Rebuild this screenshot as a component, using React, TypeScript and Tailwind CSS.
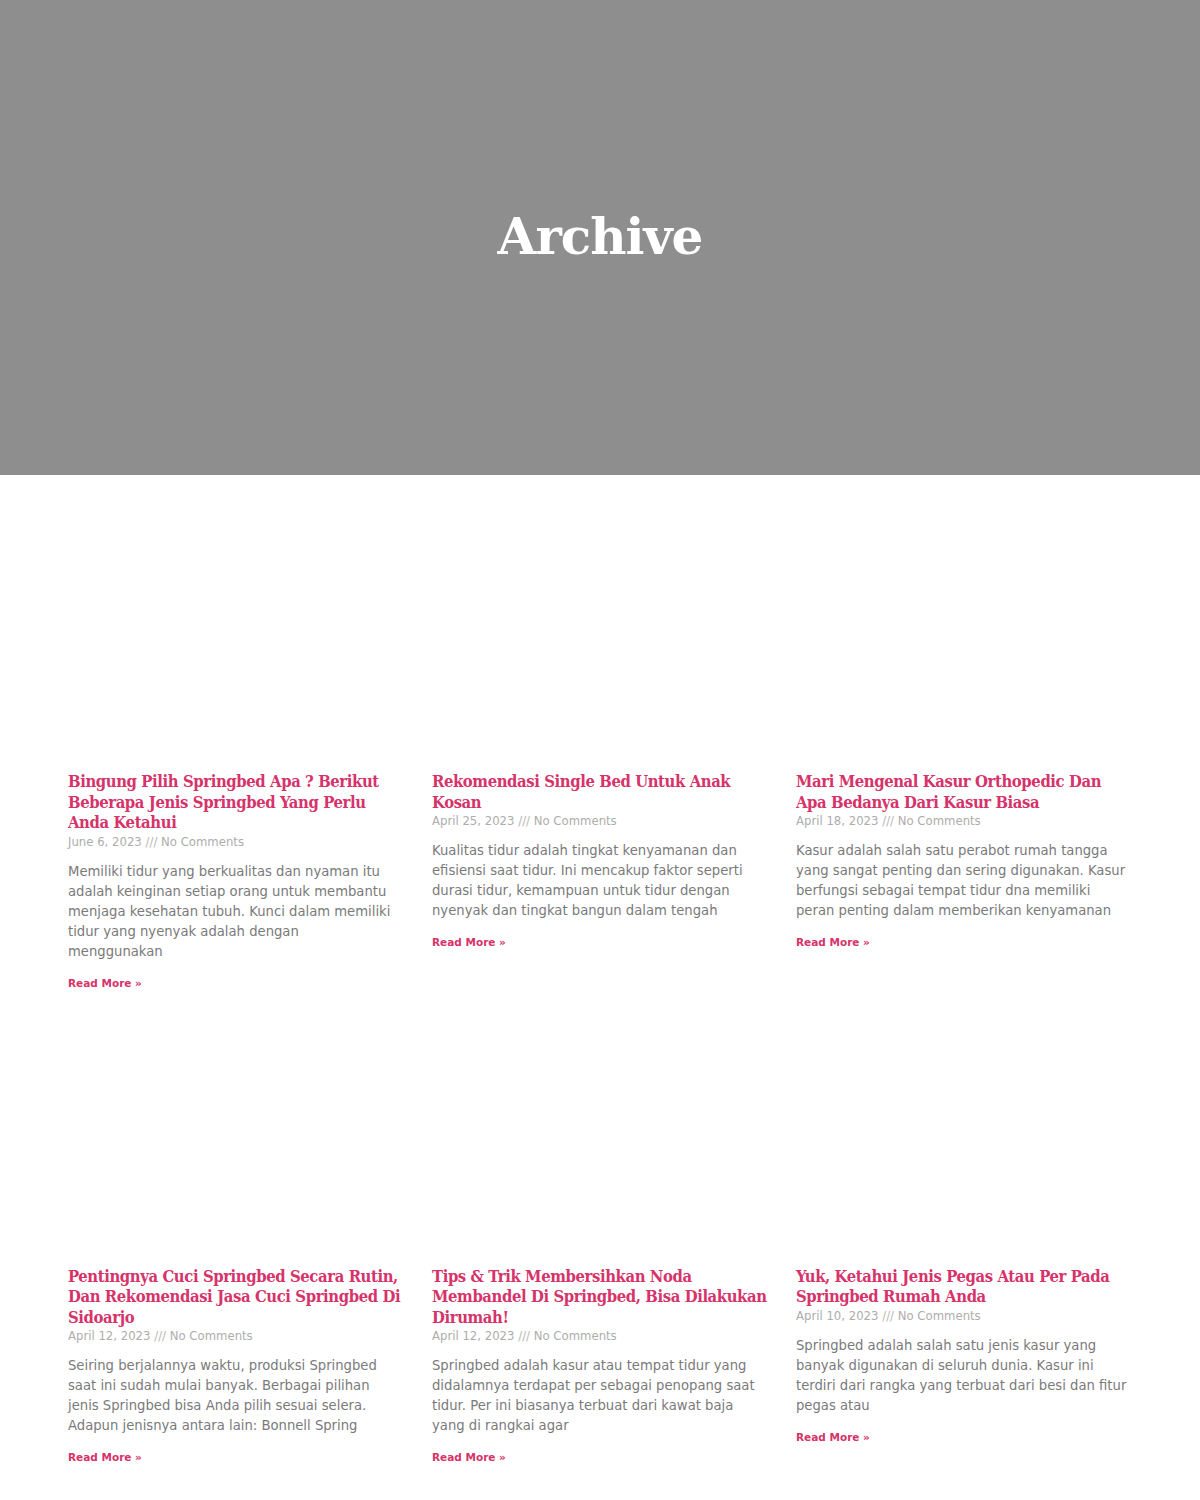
const posts = [
  {
    title: ["Bingung Pilih Springbed Apa ? Berikut", "Beberapa Jenis Springbed Yang Perlu", "Anda Ketahui"],
    date: "June 6, 2023",
    excerpt: [
      "Memiliki tidur yang berkualitas dan nyaman itu",
      "adalah keinginan setiap orang untuk membantu",
      "menjaga kesehatan tubuh. Kunci dalam memiliki",
      "tidur yang nyenyak adalah dengan",
      "menggunakan",
    ],
  },
  {
    title: ["Rekomendasi Single Bed Untuk Anak", "Kosan"],
    date: "April 25, 2023",
    excerpt: [
      "Kualitas tidur adalah tingkat kenyamanan dan",
      "efisiensi saat tidur. Ini mencakup faktor seperti",
      "durasi tidur, kemampuan untuk tidur dengan",
      "nyenyak dan tingkat bangun dalam tengah",
    ],
  },
  {
    title: ["Mari Mengenal Kasur Orthopedic Dan", "Apa Bedanya Dari Kasur Biasa"],
    date: "April 18, 2023",
    excerpt: [
      "Kasur adalah salah satu perabot rumah tangga",
      "yang sangat penting dan sering digunakan. Kasur",
      "berfungsi sebagai tempat tidur dna memiliki",
      "peran penting dalam memberikan kenyamanan",
    ],
  },
  {
    title: ["Pentingnya Cuci Springbed Secara Rutin,", "Dan Rekomendasi Jasa Cuci Springbed Di", "Sidoarjo"],
    date: "April 12, 2023",
    excerpt: [
      "Seiring berjalannya waktu, produksi Springbed",
      "saat ini sudah mulai banyak. Berbagai pilihan",
      "jenis Springbed bisa Anda pilih sesuai selera.",
      "Adapun jenisnya antara lain: Bonnell Spring",
    ],
  },
  {
    title: ["Tips & Trik Membersihkan Noda", "Membandel Di Springbed, Bisa Dilakukan", "Dirumah!"],
    date: "April 12, 2023",
    excerpt: [
      "Springbed adalah kasur atau tempat tidur yang",
      "didalamnya terdapat per sebagai penopang saat",
      "tidur. Per ini biasanya terbuat dari kawat baja",
      "yang di rangkai agar",
    ],
  },
  {
    title: ["Yuk, Ketahui Jenis Pegas Atau Per Pada", "Springbed Rumah Anda"],
    date: "April 10, 2023",
    excerpt: [
      "Springbed adalah salah satu jenis kasur yang",
      "banyak digunakan di seluruh dunia. Kasur ini",
      "terdiri dari rangka yang terbuat dari besi dan fitur",
      "pegas atau",
    ],
  },
];

function PostCard({ post }: { post: (typeof posts)[number] }) {
  return (
    <article className="flex flex-col">
      <div className="h-[247px]" />
      <h3 className="font-['DejaVu_Serif',serif] font-bold font-stretch-condensed text-[16.5px] leading-[20.5px] text-[#d6336a] tracking-[-0.4px]">
        {post.title.map((l, i) => (
          <span key={i} className="block whitespace-nowrap">
            {l}
          </span>
        ))}
      </h3>
      <div className="font-['DejaVu_Sans',sans-serif] text-[11.7px] leading-[18px] text-[#adadad] -mt-[1px]">
        {post.date} <span className="text-[#b8b8b8]">///</span> No Comments
      </div>
      <p className="font-['DejaVu_Sans',sans-serif] text-[13.2px] leading-[20px] text-[#7a7a7a] mt-[11px]">
        {post.excerpt.map((l, i) => (
          <span key={i} className="block whitespace-nowrap">
            {l}
          </span>
        ))}
      </p>
      <a className="font-['DejaVu_Sans',sans-serif] font-bold text-[10.5px] leading-[14px] text-[#d6336a] mt-[14px]">
        Read More »
      </a>
    </article>
  );
}

export default function App() {
  return (
    <div className="w-[1200px] bg-white min-h-[1500px]">
      <header className="h-[475px] bg-[#8e8e8e] flex items-center justify-center">
        <h1 className="font-['DejaVu_Serif',serif] font-bold text-[50px] text-white tracking-[-1px] -mt-[2px]">
          Archive
        </h1>
      </header>
      <main className="w-[1064px] ml-[68px] pt-[50px] pb-10">
        <div className="grid grid-cols-3 gap-x-[28px] gap-y-[30px]">
          {posts.map((p, i) => (
            <PostCard key={i} post={p} />
          ))}
        </div>
      </main>
    </div>
  );
}
